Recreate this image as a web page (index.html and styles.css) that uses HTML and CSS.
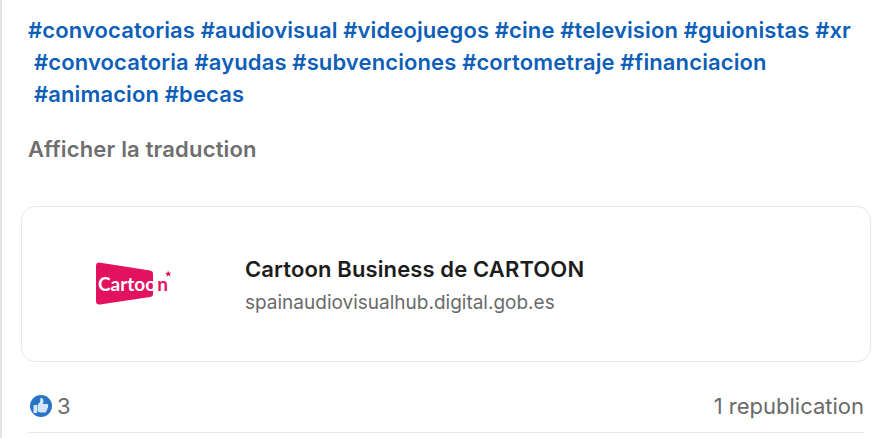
FILE: index.html
```html
<!DOCTYPE html>
<html lang="fr">
  <head>
    <meta charset="utf-8">
    <title>Cartoon Business de CARTOON</title>
    <link rel="stylesheet" href="styles.css">
  </head>
  <body>
    <main class="post">
      <p class="tags">
        <span class="tag-line"><a href="#">#convocatorias</a> <a href="#">#audiovisual</a> <a href="#">#videojuegos</a> <a href="#">#cine</a> <a href="#">#television</a> <a href="#">#guionistas</a> <a href="#">#xr</a></span>
        <span class="tag-line indent"><a href="#">#convocatoria</a> <a href="#">#ayudas</a> <a href="#">#subvenciones</a> <a href="#">#cortometraje</a> <a href="#">#financiacion</a></span>
        <span class="tag-line indent"><a href="#">#animacion</a> <a href="#">#becas</a></span>
      </p>

      <p class="translate">Afficher la traduction</p>

      <a class="card" href="#">
        <div class="card-logo">
          <svg width="78" height="46" viewBox="0 0 78 46">
            <path d="M4 1.500 Q1 1.500 1 5 L1 40 Q1 44 5 43.500 L55 36 Q58 35.500 58 33 L58 12.500 Q58 10 55 9.500 Z" fill="#e2125f"/>
            <text class="logo-text" x="3" y="29.500">Cartoo<tspan class="logo-pink" dx="1">n</tspan></text>
            <path d="M73 9.500 l1 2.200 2.300 -.3 -1.600 1.700 .9 2.200 -2.200 -1 -1.800 1.400 .4 -2.300 -1.900 -1.300 2.300 -.4 Z" fill="#e2125f"/>
          </svg>
        </div>
        <div class="card-body">
          <h2>Cartoon Business de CARTOON</h2>
          <p>spainaudiovisualhub.digital.gob.es</p>
        </div>
      </a>

      <footer class="counts">
        <span class="likes">
          <svg width="22" height="22" viewBox="0 0 22 22">
            <circle cx="11" cy="11" r="11" fill="#2a74c6"/>
            <path d="M3.500 10 h3.500 v8 h-3.500 Z" fill="#d3e5f7"/>
            <path d="M7.500 10 L10 7 L10.500 2.800 Q13.500 2.800 13.500 6.500 L13 9 L17.500 9 Q18.800 9.800 18 11.200 Q18.600 12.500 17.400 13.300 Q17.800 14.600 16.600 15.200 Q16.800 17 15.200 17.500 L10.500 17.500 L7.500 16.500 Z" fill="#d3e5f7"/>
          </svg>
          3
        </span>
        <span>1 republication</span>
      </footer>
    </main>
  </body>
</html>
```

FILE: styles.css
```css
:root {
  font-family: Inter, "Liberation Sans", Arial, sans-serif;
  font-size: 16px;
}

body {
  margin: 0;
  padding: 0;
  background: #fff;
  overflow: hidden;
}

.post {
  height: 438px;
  box-sizing: border-box;
  border-left: 2px solid #e3e3e3;
  padding: 14px 19px 0 19px;
  width: 890px;
}

.tags {
  margin: 0 0 0 7px;
  font-size: 22px;
  font-weight: 600;
  line-height: 32px;
  white-space: nowrap;
  letter-spacing: 0.12px;
}
.tags a {
  color: #0f5fb8;
  text-decoration: none;
}
.tag-line {
  display: block;
}
.tag-line.indent {
  padding-left: 6px;
}

.translate {
  margin: 23px 0 0 7px;
  font-size: 22px;
  font-weight: 600;
  line-height: 32px;
  letter-spacing: 0.18px;
  color: #6f6f6f;
}

.card {
  display: flex;
  align-items: center;
  height: 156px;
  margin-top: 41px;
  box-sizing: border-box;
  border: 1px solid #e8e8e8;
  border-radius: 14px;
  color: inherit;
  text-decoration: none;
}
.card-logo {
  display: flex;
  justify-content: center;
  width: 223px;
  flex-shrink: 0;
}
.logo-text {
  font-family: Lato, sans-serif;
  font-size: 19px;
  font-weight: 700;
  fill: #fff;
}
.logo-pink {
  fill: #e2125f;
}
.card-body {
  padding-top: 4px;
}
.card-body h2 {
  margin: 0;
  font-size: 22px;
  font-weight: 600;
  line-height: 30px;
  letter-spacing: 0.12px;
  color: #1c1c1c;
}
.card-body p {
  margin: 4px 0 0;
  font-size: 19px;
  line-height: 30px;
  color: #6a6a6a;
}

.counts {
  display: flex;
  justify-content: space-between;
  align-items: center;
  height: 71px;
  margin: 0 7px;
  box-sizing: border-box;
  border-bottom: 1px solid #e8e8e8;
  padding-top: 18px;
  font-size: 22px;
  color: #6a6a6a;
}
.likes {
  display: flex;
  align-items: center;
  gap: 5px;
  padding-left: 2px;
}
```
